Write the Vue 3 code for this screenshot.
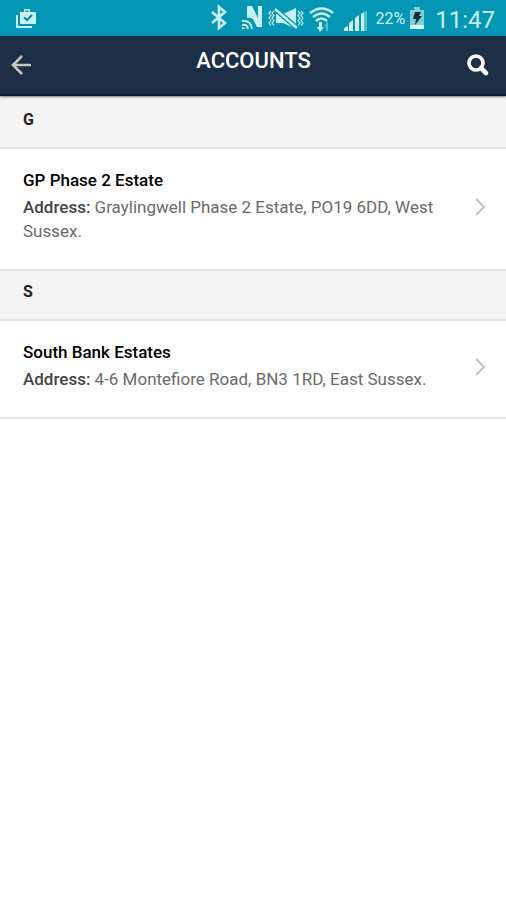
<script setup>
const groups = [
  {
    letter: 'G',
    accounts: [{ name: 'GP Phase 2 Estate', address: 'Graylingwell Phase 2 Estate, PO19 6DD, West Sussex.' }],
  },
  {
    letter: 'S',
    accounts: [{ name: 'South Bank Estates', address: '4-6 Montefiore Road, BN3 1RD, East Sussex.' }],
  },
]
</script>

<template>
  <div class="screen">
    <div class="status">
      <svg class="work" width="22" height="22" viewBox="0 0 22 22" aria-hidden="true">
        <path d="M2 8v12h15" fill="none" stroke="#c9f1f4" stroke-width="2" />
        <path d="M5 5h4V3q0-1 1-1h4q1 0 1 1v2h5q1 0 1 1v10q0 1-1 1H6q-1 0-1-1zM10.500 5h3V3.500h-3z" fill="#c9f1f4" fill-rule="evenodd" />
        <path d="M9 10.500l3 2.500 5-5" fill="none" stroke="#0a7f9c" stroke-width="2" />
      </svg>
      <svg class="icons" width="158" height="28" viewBox="0 0 158 28" aria-hidden="true">
        <g fill="none" stroke="#c9f1f4">
          <path d="M2 8l13 11-6 5V3l6 5L2 19" stroke-width="2.600" />
          <path d="M61 7l-2 2 2 2.500-2 2.500 2 2.500-2 2.500 2 2.500M64 7l-2 2 2 2.500-2 2.500 2 2.500-2 2.500 2 2.500M88 7l2 2-2 2.500 2 2.500-2 2.500 2 2.500-2 2.500M91 7l2 2-2 2.500 2 2.500-2 2.500 2 2.500-2 2.500" stroke-width="1.200" />
        </g>
        <path d="M37 14V2h5l6 12V2h4v21h-5l-4-8q-3-2-6-1z" fill="#c9f1f4" />
        <path d="M32 17q9-1 10 8M32 21q5-1 6 4" fill="none" stroke="#c9f1f4" stroke-width="2" />
        <path d="M32 25v-2q2 0 3 2z" fill="#c9f1f4" />
        <path d="M66 10h7l13-6v21l-13-6h-7z" fill="#c9f1f4" />
        <path d="M65 5l22 19" stroke="#0497b5" stroke-width="5" />
        <path d="M65 5l22 19" stroke="#c9f1f4" stroke-width="2.400" />
        <path d="M100 9q12-9 23 0M103 13q8.500-7 17 0M106 17q5.500-5 11 0" fill="none" stroke="#c9f1f4" stroke-width="2.400" />
        <path d="M109 18h3v5h2l-4 5-3-5h2z" fill="#c9f1f4" />
        <path d="M117 27v-7l-2 2" fill="none" stroke="#54bfca" stroke-width="2" />
        <path d="M134 27v-3l4-2v5zM139 27v-8l4-3v11zM145 27V14l4-3v16z" fill="#c9f1f4" />
        <path d="M151 27V10l3-2v19z" fill="#c9f1f4" />
        <path d="M154 27V8l3-2v21z" fill="#54bfca" />
      </svg>
      <span class="percent">22%</span>
      <svg class="battery" width="14" height="22" viewBox="0 0 14 22" aria-hidden="true">
        <path d="M4 0h6v3h4v19H0V3h4z" fill="#7fcfd6" />
        <path d="M0 18h14v4H0z" fill="#d8f7f8" />
        <path d="M5 5h6l-2 4h3l-7 9 1-6H3z" fill="#12303c" />
      </svg>
      <time class="clock">11:47</time>
    </div>

    <header class="bar">
      <button class="tool" type="button" aria-label="Back">
        <svg width="22" height="22" viewBox="0 0 22 22"><path d="M20 11H3M11 2l-9 9 9 9" fill="none" stroke="#c6c5c2" stroke-width="2.600" /></svg>
      </button>
      <h1>ACCOUNTS</h1>
      <button class="tool" type="button" aria-label="Search">
        <svg width="24" height="24" viewBox="0 0 24 24"><circle cx="10" cy="10" r="7" fill="none" stroke="#fff" stroke-width="3.600" /><path d="M15 15l5 5" stroke="#fff" stroke-width="4.600" stroke-linecap="round" /></svg>
      </button>
    </header>

    <main class="list">
      <section v-for="group in groups" :key="group.letter">
        <h2>{{ group.letter }}</h2>
        <a v-for="account in group.accounts" :key="account.name" class="item" href="#">
          <div class="text">
            <h3>{{ account.name }}</h3>
            <p><b>Address:</b> <span>{{ account.address }}</span></p>
          </div>
          <svg class="chevron" width="12" height="18" viewBox="0 0 12 18" aria-hidden="true"><path d="M2 1l8 8-8 8" fill="none" stroke="#c4c4c4" stroke-width="2" /></svg>
        </a>
      </section>
    </main>
  </div>
</template>

<style>
body {
  margin: 0;
  background: #fff;
}
</style>

<style scoped>
.screen {
  font-family: Roboto, "Liberation Sans", sans-serif;
  font-size: 17px;
  line-height: 24px;
  color: #6a6a6a;
}
.status {
  display: flex;
  align-items: center;
  height: 36px;
  padding: 0 11px 0 15px;
  background: #0497b5;
  color: #c9f1f4;
}
.icons {
  margin: 0 8px 0 auto;
}
.percent {
  padding-top: 2px;
  font-size: 16px;
}
.battery {
  margin: 0 11px 0 5px;
}
.clock {
  padding-top: 3px;
  font-size: 24px;
}
.bar {
  display: flex;
  align-items: center;
  justify-content: space-between;
  box-sizing: border-box;
  height: 60px;
  padding: 0 16px 0 11px;
  background: #1d2e47;
  border-bottom: 2px solid #0d1c38;
  box-shadow: 0 1px 2px rgba(0, 0, 0, 0.5);
  position: relative;
}
.tool {
  display: flex;
  padding: 0;
  border: 0;
  background: none;
}
h1 {
  margin: 0;
  padding: 0 0 8px 8px;
  font-size: 22px;
  font-weight: 500;
  color: #fff;
}
.list {
  padding-top: 3px;
  background: #f4f4f4;
}
h2 {
  margin: 0;
  padding: 9px 23px 15px;
  border-bottom: 2px solid #e4e4e4;
  background: #f4f4f4;
  font-size: 16px;
  font-weight: 700;
  color: #222;
}
.item {
  display: flex;
  align-items: center;
  justify-content: space-between;
  gap: 32px;
  padding: 19px 20px 26px 23px;
  border-bottom: 2px solid #e4e4e4;
  background: #fff;
  color: inherit;
  text-decoration: none;
}
h3 {
  margin: 0 0 3px;
  font-size: 17px;
  font-weight: 500;
  color: #000;
}
p {
  margin: 0;
}
b {
  font-weight: 500;
  color: #444;
}
.chevron {
  flex: none;
  padding-top: 3px;
}
</style>
